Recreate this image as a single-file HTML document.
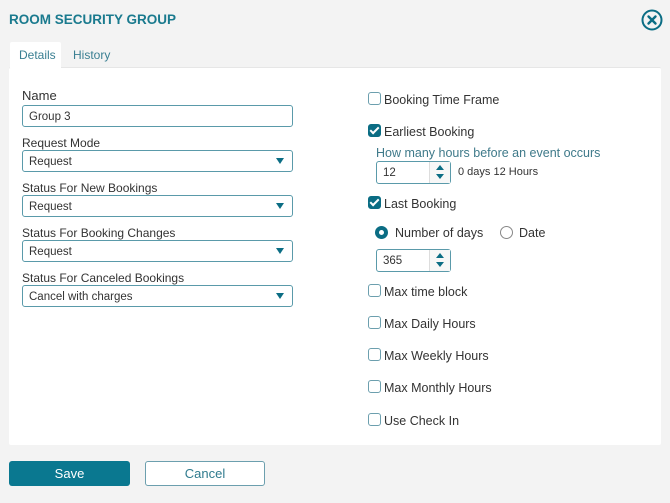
<!DOCTYPE html>
<html><head><style>
*{box-sizing:border-box;margin:0;padding:0}
body{width:670px;height:503px;background:#f3f3f3;font-family:"Liberation Sans",sans-serif;color:#333;position:relative;overflow:hidden}
.a{position:absolute}
.t{font-size:12.5px;white-space:nowrap;line-height:14px}
.lbl{font-size:12px;color:#333}
.inp{position:absolute;left:22px;width:271px;height:22px;border:1px solid #5a9aaa;border-radius:3px;background:#fff;font-size:11.5px;padding:5px 6px;line-height:13px}
.arrow{position:absolute;right:8px;top:7px;width:0;height:0;border-left:4px solid transparent;border-right:4px solid transparent;border-top:6px solid #0b6d84}
.cb{position:absolute;left:368px;width:13px;height:13px;border:1.5px solid #6c9fae;border-radius:3px;background:#fff}
.cb.on{background:#0b6d84;border-color:#0b6d84}
.cb.on:after{content:"";position:absolute;left:3px;top:0px;width:3px;height:7px;border:solid #fff;border-width:0 2px 2px 0;transform:rotate(45deg)}
.spin{position:absolute;left:376px;width:75px;height:23px;border:1px solid #5a9aaa;border-radius:3px;background:#fff;font-size:11.5px;padding:5px 6px;line-height:13px}
.spin .s{position:absolute;right:0;top:0;width:21px;height:21px;border-left:1px solid #ddd;background:#f7f7f7}
.up{position:absolute;left:6px;top:3px;border-left:4px solid transparent;border-right:4px solid transparent;border-bottom:5px solid #0b6d84}
.dn{position:absolute;left:6px;top:12px;border-left:4px solid transparent;border-right:4px solid transparent;border-top:5px solid #0b6d84}
</style></head><body>
<div class="a" style="left:9px;top:12px;font-size:13.5px;font-weight:bold;color:#1a7a8e">ROOM SECURITY GROUP</div>
<svg class="a" style="left:641px;top:9px" width="22" height="22" viewBox="0 0 22 22"><circle cx="11" cy="11" r="9.5" fill="none" stroke="#0b6d84" stroke-width="2"/><path d="M7.5 7.5L14.5 14.5M14.5 7.5L7.5 14.5" stroke="#0b6d84" stroke-width="2.4" stroke-linecap="round"/></svg>
<div class="a" style="left:9px;top:67px;width:652px;height:378px;background:#fff;border-radius:2px;border-top:1px solid #e6e6e6"></div>
<div class="a" style="left:10px;top:42px;width:51px;height:26px;background:#fff;border-radius:2px 2px 0 0"></div>
<div class="a t" style="left:19px;top:48px;font-size:12px;color:#3a7f92">Details</div>
<div class="a t" style="left:73px;top:48px;font-size:12px;color:#3a7f92">History</div>

<div class="a t" style="left:22px;top:89px;font-size:13px">Name</div>
<div class="inp" style="top:105px">Group 3</div>
<div class="a t lbl" style="left:22px;top:136px">Request Mode</div>
<div class="inp" style="top:150px">Request<div class="arrow"></div></div>
<div class="a t lbl" style="left:22px;top:181px">Status For New Bookings</div>
<div class="inp" style="top:195px">Request<div class="arrow"></div></div>
<div class="a t lbl" style="left:22px;top:226px">Status For Booking Changes</div>
<div class="inp" style="top:240px">Request<div class="arrow"></div></div>
<div class="a t lbl" style="left:22px;top:271px">Status For Canceled Bookings</div>
<div class="inp" style="top:285px">Cancel with charges<div class="arrow"></div></div>

<div class="cb" style="top:92px"></div><div class="a t" style="left:384px;top:93px">Booking Time Frame</div>
<div class="cb on" style="top:124px"></div><div class="a t" style="left:384px;top:125px">Earliest Booking</div>
<div class="a t" style="left:376px;top:146px;color:#3f7a8a">How many hours before an event occurs</div>
<div class="spin" style="top:161px">12<div class="s"><div class="up"></div><div class="dn"></div></div></div>
<div class="a t" style="left:458px;top:165px;font-size:11px">0 days 12 Hours</div>
<div class="cb on" style="top:196px"></div><div class="a t" style="left:384px;top:197px">Last Booking</div>
<div class="a" style="left:375px;top:226px;width:13px;height:13px;border-radius:50%;border:4px solid #0b6d84;background:#fff"></div>
<div class="a t" style="left:395px;top:226px">Number of days</div>
<div class="a" style="left:500px;top:226px;width:13px;height:13px;border-radius:50%;border:1px solid #888;background:#fff"></div>
<div class="a t" style="left:519px;top:226px">Date</div>
<div class="spin" style="top:249px">365<div class="s"><div class="up"></div><div class="dn"></div></div></div>
<div class="cb" style="top:284px"></div><div class="a t" style="left:384px;top:285px">Max time block</div>
<div class="cb" style="top:316px"></div><div class="a t" style="left:384px;top:317px">Max Daily Hours</div>
<div class="cb" style="top:348px"></div><div class="a t" style="left:384px;top:349px">Max Weekly Hours</div>
<div class="cb" style="top:380px"></div><div class="a t" style="left:384px;top:381px">Max Monthly Hours</div>
<div class="cb" style="top:413px"></div><div class="a t" style="left:384px;top:414px">Use Check In</div>

<div class="a" style="left:9px;top:461px;width:121px;height:25px;background:#0a7890;border-radius:3px;color:#fff;font-size:13px;text-align:center;line-height:25px">Save</div>
<div class="a" style="left:145px;top:461px;width:120px;height:25px;background:#fff;border:1px solid #6c9fae;border-radius:3px;color:#2f7b8e;font-size:13px;text-align:center;line-height:23px">Cancel</div>
</body></html>
